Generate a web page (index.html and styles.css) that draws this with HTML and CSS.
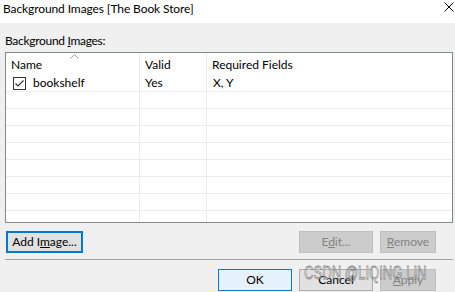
FILE: index.html
```html
<!DOCTYPE html>
<html>
<head lang="en">
    <meta charset="UTF-8">
    <title>Background Images</title>
    <link rel="stylesheet" href="styles.css">
</head>
<body>

    <div class="titlebar">
        <span class="title">Background Images [The Book Store]</span>
        <svg class="close" width="10" height="10" viewBox="0 0 10 10">
            <path d="M0.5 0.5 L9.5 9.5 M9.5 0.5 L0.5 9.5" stroke="#000" stroke-width="1" fill="none"/>
        </svg>
    </div>

    <div class="content">
        <div class="label">Background <u>I</u>mages:</div>

        <div class="list">
            <div class="head">
                <div class="c1">Name
                    <svg class="sort" width="9" height="5" viewBox="0 0 9 5">
                        <polyline points="0.5,4.5 4.5,0.5 8.5,4.5" stroke="#a0a0a0" fill="none"/>
                    </svg>
                </div>
                <div class="c2">Valid</div>
                <div class="c3">Required Fields</div>
            </div>
            <div class="row">
                <div class="c1">
                    <span class="check">
                        <svg width="11" height="11" viewBox="0 0 11 11">
                            <polyline points="1.5,5.5 4,8 9.5,2.5" stroke="#333" stroke-width="1.2" fill="none"/>
                        </svg>
                    </span>
                    bookshelf
                </div>
                <div class="c2">Yes</div>
                <div class="c3 xy">X, Y</div>
            </div>
            <div class="row"><div class="c1"></div><div class="c2"></div><div class="c3"></div></div>
            <div class="row"><div class="c1"></div><div class="c2"></div><div class="c3"></div></div>
            <div class="row"><div class="c1"></div><div class="c2"></div><div class="c3"></div></div>
            <div class="row"><div class="c1"></div><div class="c2"></div><div class="c3"></div></div>
            <div class="row"><div class="c1"></div><div class="c2"></div><div class="c3"></div></div>
            <div class="row"><div class="c1"></div><div class="c2"></div><div class="c3"></div></div>
            <div class="row"><div class="c1"></div><div class="c2"></div><div class="c3"></div></div>
            <div class="row"><div class="c1"></div><div class="c2"></div><div class="c3"></div></div>
        </div>

        <div class="btnrow">
            <div class="btn focus">Add I<u>m</u>age...</div>
            <div class="spacer"></div>
            <div class="btn off">E<u>d</u>it...</div>
            <div class="btn off small"><u>R</u>emove</div>
        </div>

        <div class="sep"></div>

        <div class="btnrow bottom">
            <div class="btn def">OK</div>
            <div class="btn">Cancel</div>
            <div class="btn off small"><u>A</u>pply</div>
        </div>
    </div>

    <div class="mark">CSDN @LIQING LIN</div>

</body>
</html>
```

FILE: styles.css
```css
* {
    padding: 0;
    margin: 0;
    box-sizing: border-box;
}
body {
    width: 455px;
    height: 292px;
    overflow: hidden;
    position: relative;
    background-color: #f0f0f0;
    color: #000;
    font-family: Lato, "Liberation Sans", sans-serif;
    font-size: 12px;
}
.titlebar {
    height: 23px;
    background-color: #fff;
    display: flex;
    justify-content: space-between;
    align-items: flex-start;
    padding: 1px 1px 0 3px;
}
.title {
    line-height: 16px;
    letter-spacing: -0.1px;
}
.close {
    margin-top: 1px;
}
.content {
    padding: 10px 0 0 5px;
}
.label {
    height: 16px;
    line-height: 16px;
    margin-bottom: 3px;
    letter-spacing: -0.3px;
}
.list {
    width: 448px;
    height: 171px;
    border: 1px solid #828790;
    background-color: #fff;
    overflow: hidden;
}
.head,
.row {
    display: flex;
}
.head {
    height: 22px;
    line-height: 20px;
}
.head > div {
    padding: 2px 0 0 5px;
}
.row {
    height: 17px;
    line-height: 16px;
    border-bottom: 1px solid #ececec;
}
.row > div {
    padding-left: 5px;
}
.c1 {
    width: 134px;
    border-right: 1px solid #ececec;
    position: relative;
}
.c2 {
    width: 67px;
    border-right: 1px solid #ececec;
}
.c3 {
    flex: 1;
}
.row .c1 {
    display: flex;
    align-items: center;
    padding-left: 7px;
}
.row .xy {
    padding-left: 6px;
}
.sort {
    position: absolute;
    left: 64px;
    top: 1px;
}
.check {
    width: 13px;
    height: 13px;
    border: 1px solid #333;
    margin-right: 7px;
    display: flex;
    align-items: center;
    justify-content: center;
}
.btnrow {
    display: flex;
    gap: 7px;
    padding-right: 19px;
    margin-top: 8px;
}
.btnrow.bottom {
    margin-top: 9px;
    justify-content: flex-end;
}
.spacer {
    flex: 1;
}
.btn {
    width: 74px;
    height: 22px;
    line-height: 20px;
    text-align: center;
    border: 1px solid #adadad;
    background-color: #e1e1e1;
}
.btn.small {
    width: 56px;
}
.btn.focus {
    width: 77px;
    margin-left: 1px;
    border: 2px solid #0078d7;
    line-height: 18px;
}
.btn.def {
    border-color: #0078d7;
    background-color: #e5f1fb;
}
.btn.off {
    background-color: #cccccc;
    border-color: #bfbfbf;
    color: #838383;
}
.sep {
    width: 448px;
    height: 1px;
    margin-top: 6px;
    background-color: #a0a0a0;
}
.mark {
    position: absolute;
    left: 304px;
    top: 262px;
    font-family: "Liberation Sans", sans-serif;
    font-size: 19px;
    white-space: nowrap;
    color: rgba(255, 255, 255, 0.5);
    -webkit-text-stroke: 0.8px rgba(100, 100, 100, 0.75);
    transform: scaleX(0.69);
    transform-origin: left top;
}
```
